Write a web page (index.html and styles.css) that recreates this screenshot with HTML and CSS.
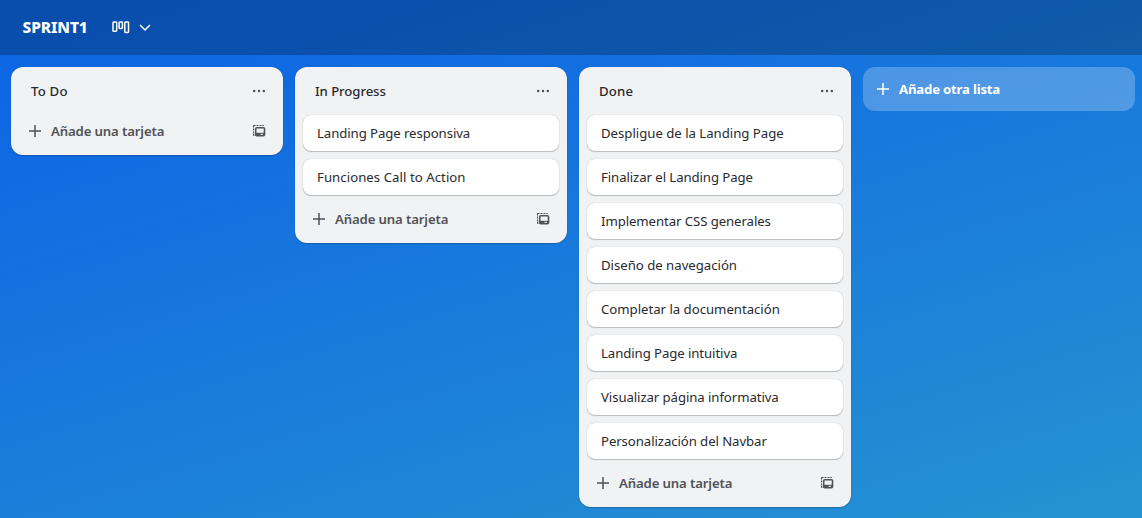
FILE: index.html
```html
<!DOCTYPE html>
<html lang="es">
<head>
<meta charset="utf-8">
<title>SPRINT1</title>
<link rel="stylesheet" href="styles.css">
</head>
<body>
<svg width="0" height="0" class="defs">
  <symbol id="dots" viewBox="0 0 16 16"><g fill="currentColor"><circle cx="3.200" cy="8" r="1.250"/><circle cx="8" cy="8" r="1.250"/><circle cx="12.800" cy="8" r="1.250"/></g></symbol>
  <symbol id="plus" viewBox="0 0 16 16"><path d="M8 2v12M2 8h12" fill="none" stroke="currentColor" stroke-width="1.500"/></symbol>
  <symbol id="template" viewBox="0 0 16 16"><rect x="4.700" y="4.700" width="8.800" height="8" rx="1" fill="none" stroke="currentColor" stroke-width="1.600"/><path d="M4.500 9.800h9v3h-9z" fill="currentColor"/><path d="M9.500 11.300h2.500" stroke="#f1f2f4"/><path d="M2.500 4.500v-2h2M5.500 2.500h2M8.500 2.500h2M11.300 2.500h1.500M2.500 5.500v2M2.500 8.500v2M2.500 11v1.200h1" fill="none" stroke="currentColor" stroke-width="1.100"/></symbol>
</svg>
<header class="topbar">
  <h1 class="board-name">SPRINT1</h1>
  <svg class="view-icon" viewBox="0 0 18 14"><g fill="none" stroke="currentColor" stroke-width="1.500"><rect x="1" y="1" width="3.700" height="9.300" rx="0.700"/><rect x="7.100" y="1" width="3.300" height="6.500" rx="0.700"/><rect x="12.800" y="1" width="3.700" height="10.500" rx="0.700"/></g></svg>
  <svg class="chevron" viewBox="0 0 12 8"><path d="M1 1l5 5 5-5" fill="none" stroke="currentColor" stroke-width="1.500"/></svg>
</header>
<main class="board">
  <section class="list">
    <div class="list-head"><h2 class="wide">To Do</h2><svg class="icon"><use href="#dots"/></svg></div>
    <div class="list-foot"><svg class="icon"><use href="#plus"/></svg><span class="add">Añade una tarjeta</span><svg class="icon"><use href="#template"/></svg></div>
  </section>
  <section class="list">
    <div class="list-head"><h2>In Progress</h2><svg class="icon"><use href="#dots"/></svg></div>
    <div class="cards">
      <div class="card">Landing Page responsiva</div>
      <div class="card looser">Funciones Call to Action</div>
    </div>
    <div class="list-foot"><svg class="icon"><use href="#plus"/></svg><span class="add">Añade una tarjeta</span><svg class="icon"><use href="#template"/></svg></div>
  </section>
  <section class="list">
    <div class="list-head"><h2 class="wide">Done</h2><svg class="icon"><use href="#dots"/></svg></div>
    <div class="cards">
      <div class="card loose">Despligue de la Landing Page</div>
      <div class="card">Finalizar el Landing Page</div>
      <div class="card">Implementar CSS generales</div>
      <div class="card loose">Diseño de navegación</div>
      <div class="card loose">Completar la documentación</div>
      <div class="card">Landing Page intuitiva</div>
      <div class="card">Visualizar página informativa</div>
      <div class="card">Personalización del Navbar</div>
    </div>
    <div class="list-foot"><svg class="icon"><use href="#plus"/></svg><span class="add">Añade una tarjeta</span><svg class="icon"><use href="#template"/></svg></div>
  </section>
  <div class="new-list"><svg class="icon"><use href="#plus"/></svg><span>Añade otra lista</span></div>
</main>
</body>
</html>
```
FILE: styles.css
```css
* { box-sizing: border-box; }
body {
  margin: 0;
  height: 518px;
  overflow: hidden;
  font: 13.2px/20px "Noto Sans", "Open Sans", sans-serif;
  letter-spacing: -0.08px;
  color: #292a2e;
  background: linear-gradient(163deg, #0c66e4 0%, #0f69e3 15%, #2593d1 100%);
}
.defs { position: absolute; }
h1, h2 { margin: 0; }
.icon { width: 16px; height: 16px; flex: none; color: #505258; }
.topbar {
  display: flex;
  align-items: center;
  height: 55px;
  padding-left: 22.5px;
  color: #fff;
  background: rgba(0, 0, 0, 0.24);
}
.board-name { width: 89.5px; padding-bottom: 2px; font-size: 15.5px; line-height: 24px; font-weight: 800; letter-spacing: -0.1px; }
.view-icon { width: 18px; height: 14px; }
.chevron { width: 12px; height: 8px; margin-left: 9px; }
.board { display: flex; align-items: flex-start; gap: 12px; padding: 12px 0 0 11px; }
.list {
  width: 272px;
  flex: none;
  padding-bottom: 8px;
  border-radius: 12px;
  background: #f1f2f4;
  box-shadow: 0 1px 1px #1e1f2140, 0 0 1px #1e1f214f;
}
.list-head { display: flex; align-items: center; justify-content: space-between; height: 48px; padding: 0 16px 0 20px; }
.list-head h2 { font-size: 13.2px; line-height: 20px; font-weight: 500; }
.list-head .wide { letter-spacing: 0.2px; }
.cards { display: flex; flex-direction: column; gap: 8px; padding: 0 8px 8px; }
.card {
  height: 36px;
  padding: 8px 14px;
  border-radius: 8px;
  background: #fff;
  box-shadow: 0 1px 1px #1e1f2140, 0 0 1px #1e1f214f;
}
.loose { letter-spacing: -0.02px; }
.looser { letter-spacing: 0.05px; }
.list-foot { display: flex; align-items: center; height: 32px; padding: 0 16px; color: #505258; font-weight: 600; letter-spacing: -0.14px; }
.add { flex: 1; padding-left: 8px; }
.new-list {
  display: flex;
  align-items: center;
  gap: 8px;
  width: 272px;
  height: 44px;
  flex: none;
  padding-left: 12px;
  border-radius: 12px;
  color: #fff;
  font-weight: 700;
  letter-spacing: -0.2px;
  background: rgba(255, 255, 255, 0.24);
}
.new-list .icon { color: #fff; }
```
